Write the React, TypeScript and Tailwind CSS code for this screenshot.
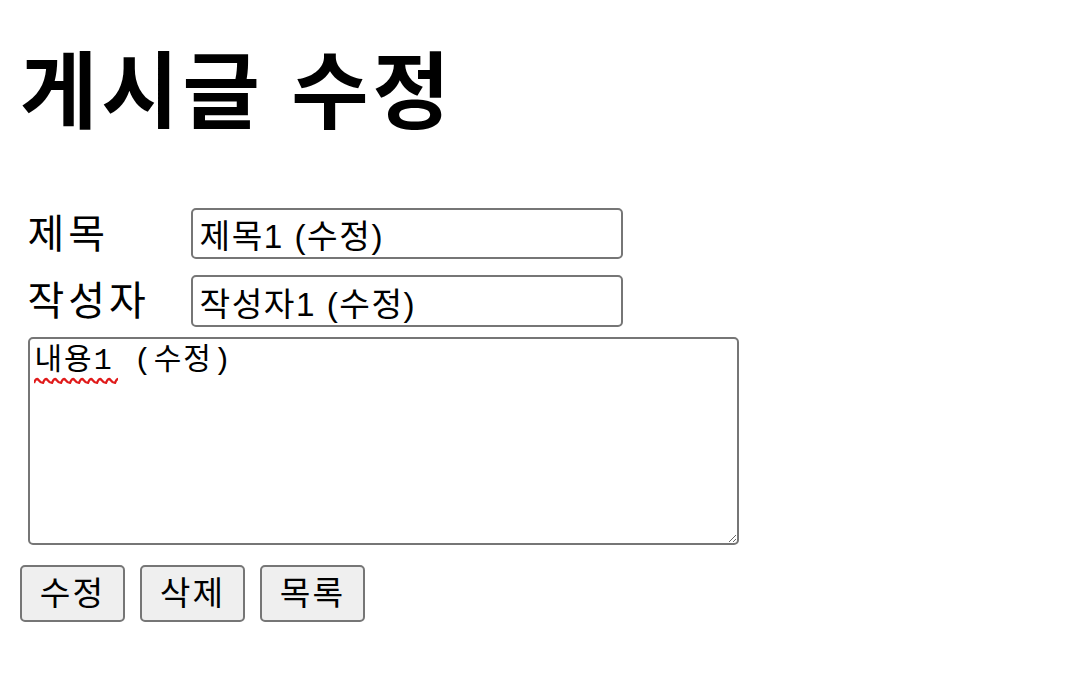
import React from "react";

const FONT = "font-['Liberation_Sans','Noto_Sans_CJK_KR',sans-serif]";

const wave = (() => {
  let d = "M0 6";
  for (let i = 0; i < 10; i++) {
    const x = i * 9;
    d += ` Q${x + 2.25} 0 ${x + 4.5} 3 T${x + 9} 6`;
  }
  return d;
})();

export default function App() {
  return (
    <div className={`${FONT} min-h-[700px] bg-white px-[20px] pt-[53px] text-black`}>
      <h1 className="text-[84px] font-bold leading-[80px] tracking-[4px]">게시글 수정</h1>

      <div className="mt-[75px] flex flex-col pl-[7.5px]">
        <div className="flex items-center">
          <label className="w-[163px] text-[40px] leading-[44px] tracking-[4px]">제목</label>
          <input
            type="text"
            defaultValue="제목1 (수정)"
            spellCheck={false}
            className="h-[51px] w-[432px] rounded-[5px] border-2 border-[#767676] bg-white px-[7px] text-[33.3px] leading-[40px] tracking-[1.5px] text-black outline-none"
          />
        </div>
        <div className="mt-[16px] flex items-center">
          <label className="w-[163px] text-[40px] leading-[44px] tracking-[4px]">작성자</label>
          <input
            type="text"
            defaultValue="작성자1 (수정)"
            spellCheck={false}
            className="h-[52px] w-[432px] rounded-[5px] border-2 border-[#767676] bg-white px-[7px] text-[33.3px] leading-[40px] tracking-[1.5px] text-black outline-none"
          />
        </div>
        <div className="relative mt-[10px] h-[208px] w-[711px]">
          <textarea
            defaultValue="내용1 (수정)"
            spellCheck={false}
            className="h-[208px] w-[711px] rounded-[5px] border-2 border-[#767676] bg-white px-[5px] py-[3px] font-['Liberation_Mono','Noto_Sans_CJK_KR',monospace] text-[30px] leading-[38px] tracking-[2px] text-black outline-none"
          />
          <svg
            className="pointer-events-none absolute left-[6px] top-[39px]"
            width="84"
            height="9"
            viewBox="0 0 84 9"
          >
            <path d={wave} fill="none" stroke="#e01b1b" strokeWidth="2.2" transform="translate(0 1)" />
          </svg>
        </div>
      </div>

      <div className="mt-[20px] flex gap-[15px]">
        {["수정", "삭제", "목록"].map((t) => (
          <button
            key={t}
            type="button"
            className="flex h-[57px] w-[105px] items-center justify-center rounded-[5px] border-2 border-[#767676] bg-[#efefef] text-[33.3px] leading-[40px] tracking-[2px] text-black"
          >
            {t}
          </button>
        ))}
      </div>
    </div>
  );
}
